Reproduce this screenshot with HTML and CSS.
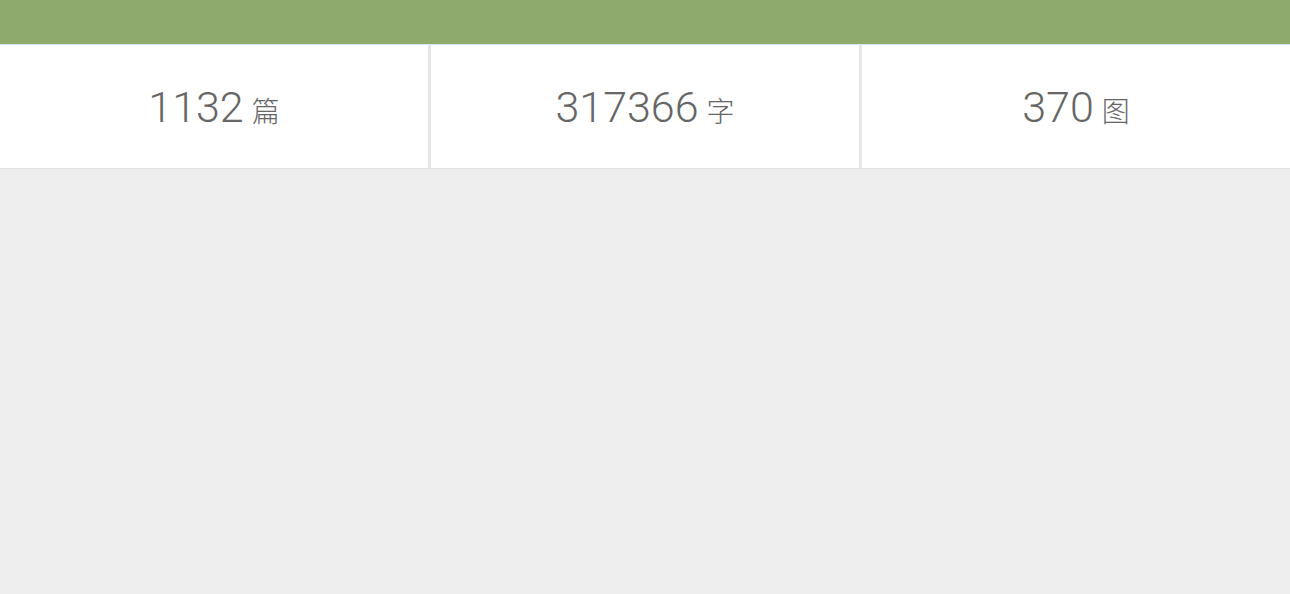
FILE: index.html
```html
<!DOCTYPE html>
<html lang="zh-CN">
  <head>
    <meta charset="UTF-8">
    <meta name="viewport" content="width=device-width, initial-scale=1">
    <title>统计</title>
    <link rel="stylesheet" href="styles.css">
  </head>
  <body>

<header class="top-bar"></header>

<ul class="stats">
  <li class="stat"><span class="num">1132</span><span class="unit">篇</span></li>
  <li class="stat"><span class="num">317366</span><span class="unit">字</span></li>
  <li class="stat"><span class="num">370</span><span class="unit">图</span></li>
</ul>

  </body>
</html>
```

FILE: styles.css
```css
*, ::before, ::after { box-sizing: border-box; }
html {
  font-family: Roboto, "Noto Sans CJK SC", sans-serif;
  background: #eee;
}
body { margin: 0; }

.top-bar {
  height: 45px;
  background: #8eab6d;
  border-bottom: 1px solid #dde6ee;
}

.stats {
  display: grid;
  grid-template-columns: repeat(3, 1fr);
  column-gap: 3px;
  margin: 0;
  padding: 0;
  list-style: none;
  background: #e6e6e6;
  border-bottom: 1px solid #e2e2e2;
}
.stat {
  display: flex;
  align-items: baseline;
  justify-content: center;
  gap: 8px;
  height: 123px;
  padding-top: 41px;
  color: #666;
  background: #fff;
}
.num {
  font-size: 43px;
  font-weight: 300;
  line-height: 1;
}
.unit {
  font-family: "Noto Sans CJK SC", sans-serif;
  font-size: 28px;
  font-weight: 300;
  line-height: 1;
}
```
